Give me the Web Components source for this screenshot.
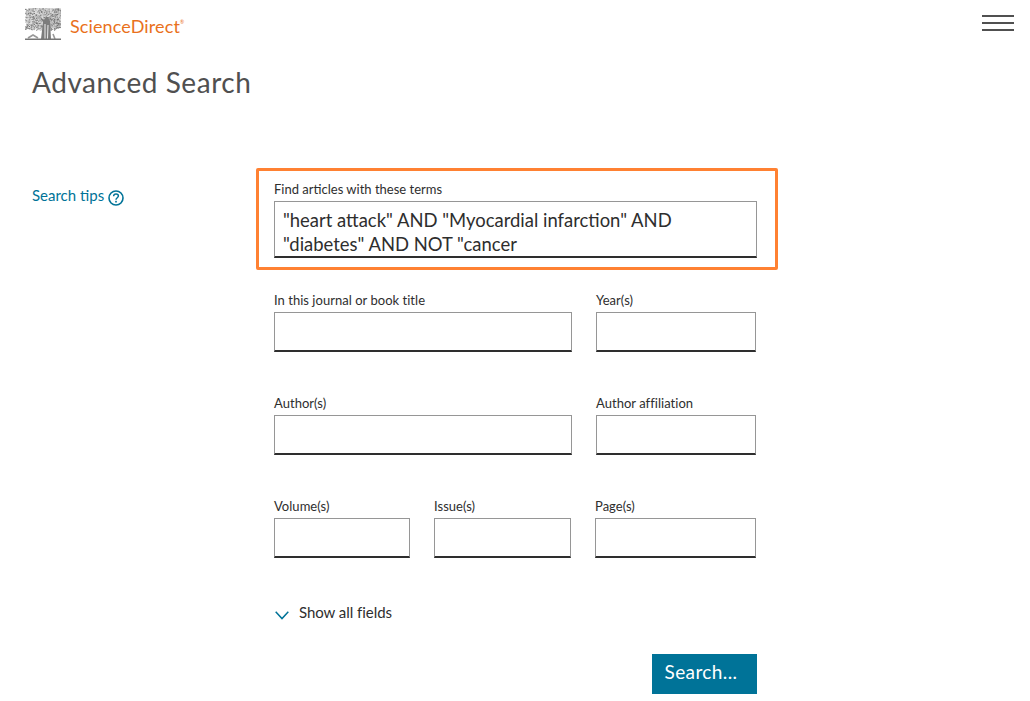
<!DOCTYPE html>
<html>
<head>
<meta charset="utf-8">
<title>Advanced Search</title>
<style>
  html, body { margin: 0; background: #fff; }
  body { font-family: Lato, "Open Sans", sans-serif; color: #2e2e2e; overflow: hidden; height: 701px; }
</style>
</head>
<body>
<sd-page>
  <sd-header slot="header"></sd-header>
  <sd-tips slot="side">Search tips</sd-tips>
  <sd-form slot="main"></sd-form>
</sd-page>

<script>
class SdPage extends HTMLElement {
    constructor() {
        super();
        this.attachShadow({ mode: 'open' });
        this.shadowRoot.innerHTML = `
            <style>
                :host { display: block; width: 1030px; }
                h1 {
                    margin: 0; padding: 15px 0 0 32px;
                    font: 400 28px/36px Lato, sans-serif;
                    letter-spacing: .55px;
                    color: #505050;
                }
                .cols { display: grid; grid-template-columns: 274px 483px; padding-top: 68px; }
            </style>
            <slot name="header"></slot>
            <h1>Advanced Search</h1>
            <div class="cols">
                <slot name="side"></slot>
                <slot name="main"></slot>
            </div>
        `;
    }
}

class SdHeader extends HTMLElement {
    constructor() {
        super();
        this.attachShadow({ mode: 'open' });
        this.shadowRoot.innerHTML = `
            <style>
                :host { display: flex; align-items: flex-start; justify-content: space-between; height: 41px; padding: 8px 16px 0 25px; box-sizing: content-box; }
                .brand { display: flex; align-items: flex-start; gap: 9px; }
                .name { font: 400 18px/22px Lato, sans-serif; color: #e9711c; padding-top: 7px; letter-spacing: .12px; }
                .name sup { font-size: 5px; line-height: 0; vertical-align: 9px; }
                .menu { display: flex; flex-direction: column; gap: 5px; width: 32px; padding-top: 7px; }
                .menu i { display: block; height: 2px; background: #505050; }
                svg { display: block; }
            </style>
            <div class="brand">
                <svg id="tree" width="36" height="32" viewBox="0 0 36 32"></svg>
                <span class="name">ScienceDirect<sup>®</sup></span>
            </div>
            <div class="menu"><i></i><i></i><i></i></div>
        `;
        this.drawTree();
    }

    // rough speckled version of the publisher's tree mark
    drawTree() {
        const svg = this.shadowRoot.getElementById('tree');
        let seed = 7;
        const rnd = () => (seed = (seed * 16807) % 2147483647) / 2147483647;
        let specks = '';
        for (let i = 0; i < 700; i++) {
            const x = rnd() * 36, y = rnd() * 22;
            const dark = rnd();
            specks += `<rect x="${x.toFixed(1)}" y="${y.toFixed(1)}" width="1" height="1" fill="${dark > .6 ? '#707070' : '#b4b4b4'}"/>`;
        }
        svg.innerHTML = `
            <path d="M1 2 L5 0 L33 0 L36 3 L36 17 L32 22 L5 21 L1 17 Z" fill="#dcdcdc"/>
            ${specks}
            <path d="M0 22 L4 21 L5 23 L0 25 Z M31 21 L36 20 L36 23 L32 24 Z" fill="#fff"/>
            <path d="M16 31 L18 14 L15 9 L19 12 L21 9 L23 9 L25 13 L26 31 Z" fill="#7c7c7c"/>
            <path d="M20 31 L20 16 M22.5 31 L23 17" stroke="#eee" stroke-width="1"/>
            <path d="M3 30 L8 27 L13 30 M28 26 L30 31" stroke="#999" stroke-width="1.6" fill="none"/>
            <rect y="30.5" width="36" height="1.5" fill="#777"/>
        `;
    }
}

class SdTips extends HTMLElement {
    constructor() {
        super();
        this.attachShadow({ mode: 'open' });
        this.shadowRoot.innerHTML = `
            <style>
                :host { display: flex; align-items: flex-start; gap: 4px; padding: 17px 0 0 32px; font: 400 15px/20px Lato, sans-serif; color: #007398; }
                svg { display: block; margin-top: 5px; }
            </style>
            <slot></slot>
            <svg width="16" height="16" viewBox="0 0 16 16">
                <circle cx="8" cy="8" r="7" fill="none" stroke="#007398" stroke-width="1.6"/>
                <path d="M5.6 6.2 C5.7 4.6 6.9 4 8 4 C9.4 4 10.4 4.9 10.4 6.1 C10.4 7.7 8 7.8 8 9.7" fill="none" stroke="#007398" stroke-width="1.5"/>
                <rect x="7.2" y="10.8" width="1.6" height="1.7" fill="#007398"/>
            </svg>
        `;
    }
}

class SdField extends HTMLElement {
    constructor() {
        super();
        this.attachShadow({ mode: 'open' });
        this.shadowRoot.innerHTML = `
            <style>
                :host { display: block; min-width: 0; }
                label { display: block; font: 400 13px/16px Lato, sans-serif; color: #2e2e2e; margin-bottom: 4px; letter-spacing: .03px; }
                .box {
                    box-sizing: border-box; height: 40px;
                    border: 1px solid #969696; border-bottom: 2px solid #2e2e2e;
                    background: #fff;
                }
            </style>
            <label></label>
            <div class="box"></div>
        `;
        this.shadowRoot.querySelector('label').textContent = this.getAttribute('label');
    }
}

class SdTerms extends HTMLElement {
    constructor() {
        super();
        this.attachShadow({ mode: 'open' });
        this.shadowRoot.innerHTML = `
            <style>
                :host { display: block; position: relative; height: 70px; }
                label { display: block; font: 400 13px/16px Lato, sans-serif; margin-bottom: 4px; }
                .box {
                    box-sizing: border-box; height: 57px; width: 483px;
                    border: 1px solid #969696; border-bottom: 2px solid #2e2e2e;
                    padding: 6px 8px 0;
                    font: 400 18.45px/24px Lato, sans-serif; color: #2e2e2e;
                }
                .hl {
                    position: absolute; left: -18px; top: -13px; width: 522px; height: 102px;
                    box-sizing: border-box; border: 3px solid #ff8132; border-radius: 2px;
                    pointer-events: none;
                }
            </style>
            <label>Find articles with these terms</label>
            <div class="box">"heart attack" AND "Myocardial infarction" AND<br>"diabetes" AND NOT "cancer</div>
            <div class="hl"></div>
        `;
    }
}

class SdForm extends HTMLElement {
    constructor() {
        super();
        this.attachShadow({ mode: 'open' });
        this.shadowRoot.innerHTML = `
            <style>
                :host { display: block; padding-top: 13px; }
                .row { display: grid; column-gap: 24px; margin-top: 43px; }
                .first { margin-top: 41px; }
                .two { grid-template-columns: 298px 160px; }
                .three { grid-template-columns: 136px 137px 161px; }
                .more { display: flex; align-items: center; gap: 10px; margin: 43px 0 0 1px; font: 400 15px/22px Lato, sans-serif; color: #2e2e2e; letter-spacing: -.05px; }
                .more svg { margin-top: 7px; }
                .actions { display: flex; justify-content: flex-end; margin-top: 31px; }
                button {
                    width: 105px; height: 40px; border: 0; border-radius: 0;
                    background: #007398; color: #fff;
                    font: 400 19px/24px Lato, sans-serif; letter-spacing: .4px; padding: 0 7px 5px 0;
                }
            </style>
            <sd-terms></sd-terms>
            <div class="row two first">
                <sd-field label="In this journal or book title"></sd-field>
                <sd-field label="Year(s)"></sd-field>
            </div>
            <div class="row two">
                <sd-field label="Author(s)"></sd-field>
                <sd-field label="Author affiliation"></sd-field>
            </div>
            <div class="row three">
                <sd-field label="Volume(s)"></sd-field>
                <sd-field label="Issue(s)"></sd-field>
                <sd-field label="Page(s)"></sd-field>
            </div>
            <div class="more">
                <svg width="14" height="9" viewBox="0 0 14 9"><path d="M.7 .8 L7 7.6 L13.3 .8" fill="none" stroke="#007398" stroke-width="1.5"/></svg>
                <span>Show all fields</span>
            </div>
            <div class="actions"><button>Search...</button></div>
        `;
    }
}

customElements.define('sd-field', SdField);
customElements.define('sd-terms', SdTerms);
customElements.define('sd-form', SdForm);
customElements.define('sd-tips', SdTips);
customElements.define('sd-header', SdHeader);
customElements.define('sd-page', SdPage);
</script>
</body>
</html>
